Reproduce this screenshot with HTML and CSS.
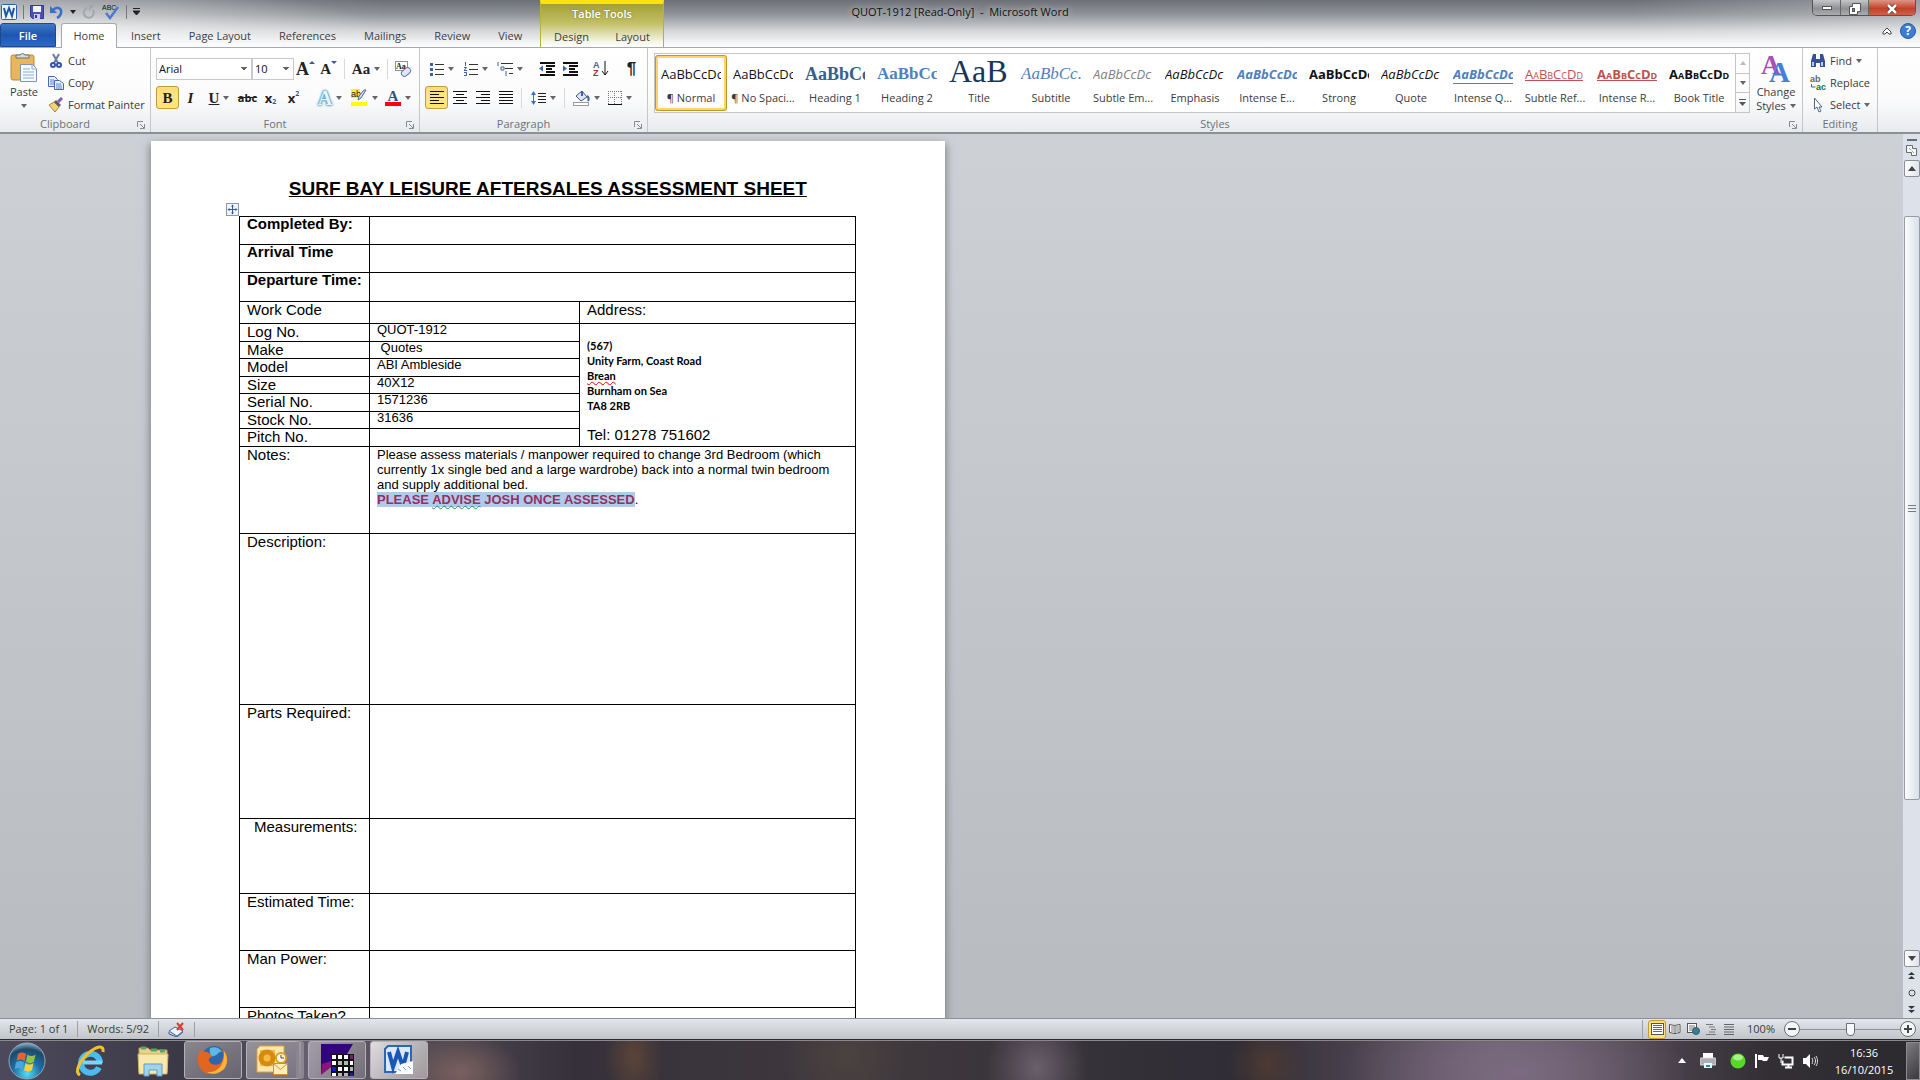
FILE: index.html
```html
<!DOCTYPE html>
<html lang="en">

<head>
    <meta charset="UTF-8">
    <meta name="viewport" content="width=device-width, initial-scale=1.0">
    <title>QUOT-1912 [Read-Only] - Microsoft Word</title>
    <link rel="stylesheet" href="styles.css">
</head>

<body>
    <header class="header">
        <div class="header-left">
            <div class="quick-access">
                <svg width="16" height="16" viewBox="0 0 16 16"><rect x="0.5" y="0.5" width="15" height="15" rx="1" fill="#eef4fc" stroke="#2b5fa8"/><path d="M3 4l2 8 3-8 3 8 2-8" fill="none" stroke="#1d55a5" stroke-width="2"/></svg>
                <span class="qa-line"></span>
                <button aria-label="Save"><svg width="14" height="14" viewBox="0 0 14 14"><path d="M0.5 0.5h13v13h-11l-2-2z" fill="#4c50b8" stroke="#34388e"/><rect x="3" y="1" width="8" height="6" fill="#f2f4fb"/><rect x="4" y="9" width="6" height="5" fill="#c9cde6"/><rect x="5" y="10" width="2" height="3" fill="#34388e"/></svg></button>
                <button aria-label="Undo"><svg width="14" height="14" viewBox="0 0 14 14"><path d="M3 5c4-4 9-2 8 3-0.500 3-2 4-4 5" fill="none" stroke="#3b6fc4" stroke-width="2.500"/><path d="M0 1v7h7z" fill="#3b6fc4"/></svg></button>
                <span class="arrow dark"></span>
                <button aria-label="Redo"><svg width="14" height="14" viewBox="0 0 14 14"><path d="M5 3a5 5 0 1 0 6 2" fill="none" stroke="#a3a6ab" stroke-width="2"/><path d="M7 6V0h6z" fill="#a3a6ab"/></svg></button>
                <button aria-label="Spelling"><svg width="18" height="16" viewBox="0 0 18 16"><text x="0" y="6" font-family="Liberation Sans" font-size="7" fill="#111">ABC</text><path d="M4 9l4 5 8-11" fill="none" stroke="#4b7bd0" stroke-width="2.500"/></svg></button>
                <span class="qa-line"></span>
                <svg width="7" height="7" viewBox="0 0 7 7"><path d="M0 0.500h7M0 3h7L3.500 7z" stroke="#222" fill="#222" stroke-width="1"/></svg>
            </div>
            <nav class="tabs">
                <button class="tab file">File</button>
                <button class="tab active">Home</button>
                <button class="tab">Insert</button>
                <button class="tab">Page Layout</button>
                <button class="tab">References</button>
                <button class="tab">Mailings</button>
                <button class="tab">Review</button>
                <button class="tab">View</button>
            </nav>
        </div>
        <div class="context">
            <div class="context-title">Table Tools</div>
            <nav class="tabs">
                <button class="tab">Design</button>
                <button class="tab">Layout</button>
            </nav>
        </div>
        <h1 class="window-title">QUOT-1912 [Read-Only]&nbsp; -&nbsp; Microsoft Word</h1>
        <div class="header-right">
            <div class="window-buttons">
                <button aria-label="Minimize"><svg width="10" height="5"><rect x="0.500" y="0.500" width="9" height="3" fill="#fff" stroke="#555"/></svg></button>
                <button aria-label="Restore"><svg width="12" height="12"><path d="M3.500 0.500h8v8h-3v3h-8v-8h3z" fill="#fff" stroke="#555"/><rect x="3.500" y="5.500" width="2" height="3" fill="#888" stroke="#555"/></svg></button>
                <button class="close" aria-label="Close"><svg width="12" height="10" viewBox="0 0 12 10"><path d="M2 1l8 8M10 1L2 9" stroke="#5c2a24" stroke-width="4"/><path d="M2 1l8 8M10 1L2 9" stroke="#fff" stroke-width="2.500"/></svg></button>
            </div>
            <div class="help-row">
                <button aria-label="Minimize the Ribbon"><svg width="10" height="9" viewBox="0 0 10 9"><path d="M1 5l4-4 4 4v2H7L5 5 3 7H1z" fill="#fff" stroke="#444"/></svg></button>
                <button aria-label="Help"><svg width="16" height="16" viewBox="0 0 16 16"><circle cx="8" cy="8" r="7.500" fill="#3e7bd3" stroke="#2a5da8"/><text x="8" y="12" text-anchor="middle" font-family="Open Sans" font-weight="700" font-size="12" fill="#fff">?</text></svg></button>
            </div>
        </div>
    </header>

    <section class="ribbon">
        <div class="group clipboard">
            <div class="group-body">
                <button class="big">
                    <svg width="28" height="32" viewBox="0 0 28 32"><rect x="1" y="3" width="23" height="25" rx="2" fill="#e9b65f" stroke="#b98a3c"/><path d="M6 6V3h4a3 3 0 0 1 5 0h4v3z" fill="#d8dade" stroke="#6d7077"/><path d="M10.500 12.500h12l4 4v13h-16z" fill="#f7faff" stroke="#7c93b8"/><path d="M22 12v5h5M13 17h7M13 20h11M13 23h11M13 26h11" fill="none" stroke="#8ea9d2"/></svg>
                    <span>Paste</span>
                    <span class="arrow"></span>
                </button>
                <div class="stack">
                    <button class="cmd"><svg width="16" height="16" viewBox="0 0 16 16"><path d="M5 1l5 9M11 1L6 10" stroke="#6b7c99" stroke-width="2"/><circle cx="5" cy="12" r="2" fill="none" stroke="#2f55b0" stroke-width="2"/><circle cx="11" cy="12" r="2" fill="none" stroke="#2f55b0" stroke-width="2"/></svg>Cut</button>
                    <button class="cmd"><svg width="16" height="16" viewBox="0 0 16 16"><path d="M0.500 1.500h6l3 3v7h-9z" fill="#eaf1fc" stroke="#4469ad"/><path d="M6.500 5.500h5l4 3v6h-9z" fill="#eaf1fc" stroke="#4469ad"/><path d="M2 5h4M2 7h4M2 9h4M8 9h5M8 11h6M8 13h6" stroke="#5d84c6"/></svg>Copy</button>
                    <button class="cmd"><svg width="16" height="16" viewBox="0 0 16 16"><path d="M1 8l5-3 5 5-4 5z" fill="#f0d375" stroke="#a98a35"/><path d="M6 5l2-2 5 5-2 2z" fill="#5a5d66"/><path d="M10 5l4-4" stroke="#8a5cb0" stroke-width="3"/></svg>Format Painter</button>
                </div>
            </div>
            <footer class="group-name">Clipboard<button class="launch" aria-label="Clipboard pane"><svg width="8" height="8" viewBox="0 0 8 8"><path d="M0.500 6V0.500H6M3 3l4 4M7.500 3v4.500H3" fill="none" stroke="#858b94"/></svg></button></footer>
        </div>

        <div class="group font">
            <div class="tools">
                <div class="tool-row">
                    <select class="font-name" aria-label="Font"><option>Arial</option></select>
                    <select class="font-size" aria-label="Font size"><option>10</option></select>
                    <button class="tool serif grow" aria-label="Grow font">A<sup class="tri-up"></sup></button>
                    <button class="tool serif shrink" aria-label="Shrink font">A<sup class="tri-down"></sup></button>
                    <span class="line"></span>
                    <button class="tool split serif">Aa<span class="arrow"></span></button>
                    <span class="line"></span>
                    <button class="tool" aria-label="Clear formatting"><svg width="17" height="16" viewBox="0 0 17 16"><rect x="0.500" y="0.500" width="12" height="9" fill="#fff" stroke="#8b93a5"/><text x="1" y="8" font-family="Liberation Serif" font-weight="700" font-size="8" fill="#222">Aa</text><rect x="6" y="8" width="10" height="6" rx="3" transform="rotate(-40 11 11)" fill="#dfe7f5" stroke="#60749b"/></svg></button>
                </div>
                <div class="tool-row">
                    <button class="tool serif on">B</button>
                    <button class="tool serif italic">I</button>
                    <button class="tool split serif"><u>U</u><span class="arrow"></span></button>
                    <button class="tool strike"><s>abc</s></button>
                    <button class="tool script">x<sub>2</sub></button>
                    <button class="tool script">x<sup>2</sup></button>
                    <span class="line"></span>
                    <button class="tool split serif glow">A<span class="arrow"></span></button>
                    <button class="tool split" aria-label="Highlight"><svg width="17" height="17" viewBox="0 0 17 17"><rect x="0" y="0" width="9" height="9" fill="#f7f02b"/><text x="0" y="8" font-family="Liberation Sans" font-size="9" fill="#222">ab</text><path d="M15 1l-5 8-3 2 1-4 5-6z" fill="#cfd9ec" stroke="#516a9a"/><rect x="0" y="13" width="16" height="4" fill="#ffff00"/></svg><span class="arrow"></span></button>
                    <button class="tool split" aria-label="Font colour"><svg width="16" height="17" viewBox="0 0 16 17"><text x="8" y="12" text-anchor="middle" font-family="Liberation Serif" font-weight="700" font-size="15" fill="#354f88">A</text><rect x="0" y="13" width="16" height="4" fill="#ff0000"/></svg><span class="arrow"></span></button>
                </div>
            </div>
            <footer class="group-name">Font<button class="launch" aria-label="Font dialog"><svg width="8" height="8" viewBox="0 0 8 8"><path d="M0.500 6V0.500H6M3 3l4 4M7.500 3v4.500H3" fill="none" stroke="#858b94"/></svg></button></footer>
        </div>

        <div class="group paragraph">
            <div class="tools">
                <div class="tool-row">
                    <button class="tool split" aria-label="Bullets"><svg width="14" height="14" viewBox="0 0 14 14"><path d="M5 2.500h9M5 7.500h9M5 12.500h9" stroke="#333"/><path d="M0 2.500h3M0 7.500h3M0 12.500h3" stroke="#3c5fa8" stroke-width="3"/></svg><span class="arrow"></span></button>
                    <button class="tool split" aria-label="Numbering"><svg width="14" height="14" viewBox="0 0 14 14"><path d="M5 2.500h9M5 7.500h9M5 12.500h9" stroke="#333"/><path d="M1.500 0v4M0 5.500h2.500L0 8.500h3M0 10.500h2.500v3H0" fill="none" stroke="#3c5fa8"/></svg><span class="arrow"></span></button>
                    <button class="tool split" aria-label="Multilevel list"><svg width="16" height="14" viewBox="0 0 16 14"><path d="M4 1.500h12M8 6.500h8M12 11.500h4" stroke="#333"/><path d="M1 0v4M4 5h3v3H4zM9 9v5" fill="none" stroke="#3c5fa8"/></svg><span class="arrow"></span></button>
                    <span class="line"></span>
                    <button class="tool" aria-label="Decrease indent"><svg width="16" height="14" viewBox="0 0 16 14"><path d="M1 1h15M7 4h9M7 7h6M7 10h9M1 13h15" stroke="#111" stroke-width="2"/><path d="M0 6.500l4-3v6z" fill="#3c5fc4"/></svg></button>
                    <button class="tool" aria-label="Increase indent"><svg width="16" height="14" viewBox="0 0 16 14"><path d="M1 1h15M7 4h9M7 7h6M7 10h9M1 13h15" stroke="#111" stroke-width="2"/><path d="M5 6.500l-4-3v6z" fill="#3c5fc4"/></svg></button>
                    <span class="line"></span>
                    <button class="tool" aria-label="Sort"><svg width="16" height="17" viewBox="0 0 16 17"><text x="0" y="8" font-family="Liberation Sans" font-weight="700" font-size="9" fill="#3c5fa8">A</text><text x="0" y="16" font-family="Liberation Sans" font-weight="700" font-size="9" fill="#a03048">Z</text><path d="M12 1v14M9 11l3 4 3-4" fill="none" stroke="#111"/></svg></button>
                    <span class="line"></span>
                    <button class="tool pilcrow">¶</button>
                </div>
                <div class="tool-row">
                    <button class="tool on" aria-label="Align left"><svg width="14" height="13" viewBox="0 0 14 13"><path d="M0 0.500h14M0 3.500h9M0 6.500h14M0 9.500h9M0 12.500h14" stroke="#111"/></svg></button>
                    <button class="tool" aria-label="Centre"><svg width="14" height="13" viewBox="0 0 14 13"><path d="M0 0.500h14M3 3.500h8M0 6.500h14M3 9.500h8M0 12.500h14" stroke="#111"/></svg></button>
                    <button class="tool" aria-label="Align right"><svg width="14" height="13" viewBox="0 0 14 13"><path d="M0 0.500h14M5 3.500h9M0 6.500h14M5 9.500h9M0 12.500h14" stroke="#111"/></svg></button>
                    <button class="tool" aria-label="Justify"><svg width="14" height="13" viewBox="0 0 14 13"><path d="M0 0.500h14M0 3.500h14M0 6.500h14M0 9.500h14M0 12.500h14" stroke="#111"/></svg></button>
                    <span class="line"></span>
                    <button class="tool split" aria-label="Line spacing"><svg width="15" height="16" viewBox="0 0 15 16"><path d="M7 3.500h8M7 6.500h8M7 9.500h8M7 12.500h8" stroke="#222"/><path d="M0 5l2.500-4L5 5zM0 11l2.500 4L5 11z" fill="#3c6fc4"/><path d="M2.500 4v8" stroke="#3c6fc4"/></svg><span class="arrow"></span></button>
                    <span class="line"></span>
                    <button class="tool split" aria-label="Shading"><svg width="17" height="16" viewBox="0 0 17 16"><path d="M3 6l6-5 5 6-6 4z" fill="#dce6f5" stroke="#45587c"/><path d="M9 1v5M14 6c2 1 2 3 1 5" fill="none" stroke="#3c5fa8" stroke-width="2"/><rect x="0.500" y="12.500" width="15" height="3" fill="#fff" stroke="#999"/></svg><span class="arrow"></span></button>
                    <button class="tool split" aria-label="Borders"><svg width="14" height="14" viewBox="0 0 14 14"><path d="M0 0.500h14M0 6.500h14M0.500 0v14M6.500 0v14M13.500 0v14" stroke="#777" stroke-dasharray="1 1"/><path d="M0 13.500h14" stroke="#111"/></svg><span class="arrow"></span></button>
                </div>
            </div>
            <footer class="group-name">Paragraph<button class="launch" aria-label="Paragraph dialog"><svg width="8" height="8" viewBox="0 0 8 8"><path d="M0.500 6V0.500H6M3 3l4 4M7.500 3v4.500H3" fill="none" stroke="#858b94"/></svg></button></footer>
        </div>

        <div class="group styles">
            <div class="group-body">
                <div class="gallery">
                    <button class="style selected"><span class="preview">AaBbCcDc</span>¶ Normal</button>
                    <button class="style"><span class="preview">AaBbCcDc</span>¶ No Spaci...</button>
                    <button class="style"><span class="preview heading one">AaBbCc</span>Heading 1</button>
                    <button class="style"><span class="preview heading">AaBbCc</span>Heading 2</button>
                    <button class="style"><span class="preview title">AaB</span>Title</button>
                    <button class="style"><span class="preview subtitle">AaBbCc.</span>Subtitle</button>
                    <button class="style"><span class="preview slant grey">AaBbCcDc</span>Subtle Em...</button>
                    <button class="style"><span class="preview slant">AaBbCcDc</span>Emphasis</button>
                    <button class="style"><span class="preview slant strong blue">AaBbCcDc</span>Intense E...</button>
                    <button class="style"><span class="preview strong">AaBbCcDc</span>Strong</button>
                    <button class="style"><span class="preview slant">AaBbCcDc</span>Quote</button>
                    <button class="style"><span class="preview slant strong blue ruled">AaBbCcDc</span>Intense Q...</button>
                    <button class="style"><span class="preview caps red">AaBbCcDd</span>Subtle Ref...</button>
                    <button class="style"><span class="preview caps red strong">AaBbCcDd</span>Intense R...</button>
                    <button class="style"><span class="preview caps strong">AaBbCcDd</span>Book Title</button>
                </div>
                <div class="gallery-scroll">
                    <button aria-label="Row up"><span class="arrow up faint"></span></button>
                    <button aria-label="Row down"><span class="arrow"></span></button>
                    <button aria-label="More styles"><svg width="7" height="7" viewBox="0 0 7 7"><path d="M0 0.500h7" stroke="#555"/><path d="M0 3h7L3.500 7z" fill="#555"/></svg></button>
                </div>
                <button class="big change">
                    <svg width="30" height="32" viewBox="0 0 30 32"><text x="0" y="22" font-family="Liberation Serif" font-weight="700" font-size="27" fill="#a94fb5">A</text><text x="8" y="30" font-family="Liberation Serif" font-weight="700" font-size="29" fill="#4580d8">A</text></svg>
                    <span>Change</span>
                    <span class="inline">Styles<span class="arrow"></span></span>
                </button>
            </div>
            <footer class="group-name">Styles<button class="launch" aria-label="Styles pane"><svg width="8" height="8" viewBox="0 0 8 8"><path d="M0.500 6V0.500H6M3 3l4 4M7.500 3v4.500H3" fill="none" stroke="#858b94"/></svg></button></footer>
        </div>

        <div class="group editing">
            <div class="stack">
                <button class="cmd"><svg width="16" height="16" viewBox="0 0 16 16"><path d="M3 1h3v5h4V1h3l2 7v6h-5v-4H6v4H1V8z" fill="#34509a"/><path d="M3 9v4M12 9v4" stroke="#b8cbee" stroke-width="2"/></svg>Find<span class="arrow"></span></button>
                <button class="cmd"><svg width="16" height="16" viewBox="0 0 16 16"><text x="0" y="7" font-family="Liberation Sans" font-weight="700" font-size="9" fill="#666">ab</text><text x="6" y="15" font-family="Liberation Sans" font-weight="700" font-size="9" fill="#26712b">ac</text><path d="M1.500 9v3h4" fill="none" stroke="#3c5fa8"/></svg>Replace</button>
                <button class="cmd"><svg width="16" height="16" viewBox="0 0 16 16"><path d="M4.500 1v11l2.500-2 2 5 2-1-2-4h3z" fill="#fff" stroke="#51658e"/></svg>Select<span class="arrow"></span></button>
            </div>
            <footer class="group-name">Editing</footer>
        </div>
    </section>

    <main class="workspace">
        <div class="canvas">
            <article class="page">
                <h2>SURF BAY LEISURE AFTERSALES ASSESSMENT SHEET</h2>
                <div class="sheet-wrap">
                    <svg class="move-handle" width="13" height="13" viewBox="0 0 13 13"><rect x="0.500" y="0.500" width="12" height="12" fill="#f1f4fa" stroke="#8d97a8"/><path d="M6.500 2v9M2 6.500h9" stroke="#33569c"/><path d="M5 3.500l1.500-2 1.500 2zM5 9.500l1.500 2 1.500-2zM3.500 5l-2 1.500 2 1.500zM9.500 5l2 1.500-2 1.500z" fill="#33569c"/></svg>
                    <table class="sheet">
                        <colgroup><col class="c1"><col class="c2"><col class="c3"></colgroup>
                        <tr class="tall"><th class="bold">Completed By:</th><td colspan="2"></td></tr>
                        <tr class="tall"><th class="bold">Arrival Time</th><td colspan="2"></td></tr>
                        <tr class="tall last"><th class="bold">Departure Time:</th><td colspan="2"></td></tr>
                        <tr class="work"><th>Work Code</th><td></td><td class="large">Address:</td></tr>
                        <tr class="odd"><th>Log No.</th><td>QUOT-1912</td>
                            <td class="address" rowspan="7">
                                <address>(567)<br>Unity Farm, Coast Road<br><span class="misspelt">Brean</span><br>Burnham on Sea<br>TA8 2RB</address>
                                <p class="large">Tel: 01278 751602</p>
                            </td>
                        </tr>
                        <tr class="even"><th>Make</th><td>&nbsp;Quotes</td></tr>
                        <tr class="odd"><th>Model</th><td>ABI Ambleside</td></tr>
                        <tr class="even"><th>Size</th><td>40X12</td></tr>
                        <tr class="odd"><th>Serial No.</th><td>1571236</td></tr>
                        <tr class="even"><th>Stock No.</th><td>31636</td></tr>
                        <tr class="odd"><th>Pitch No.</th><td></td></tr>
                        <tr class="notes"><th>Notes:</th><td colspan="2">Please assess materials / manpower required to change 3rd Bedroom (which<br>currently 1x single bed and a large wardrobe) back into a normal twin bedroom<br>and supply additional bed.<br><mark>PLEASE <span class="grammar">ADVISE</span> JOSH ONCE ASSESSED</mark>.</td></tr>
                        <tr class="description"><th>Description:</th><td colspan="2"></td></tr>
                        <tr class="parts"><th>Parts Required:</th><td colspan="2"></td></tr>
                        <tr class="measure"><th class="indent">Measurements:</th><td colspan="2"></td></tr>
                        <tr class="estimate"><th>Estimated Time:</th><td colspan="2"></td></tr>
                        <tr class="estimate"><th>Man Power:</th><td colspan="2"></td></tr>
                        <tr class="estimate"><th>Photos Taken?</th><td colspan="2"></td></tr>
                    </table>
                </div>
            </article>
        </div>
        <div class="scrollbar">
            <span class="splitter"></span>
            <button class="ruler" aria-label="View ruler"><svg width="13" height="13" viewBox="0 0 13 13"><path d="M1.500 1.500h6v3h4v7h-5v-3h-5z" fill="#f7f8fa" stroke="#666b74"/><path d="M4 4l5 5" stroke="#666b74" stroke-dasharray="1 1"/></svg></button>
            <button class="scroll-btn" aria-label="Scroll up"><span class="arrow big-arrow up"></span></button>
            <div class="track"><div class="thumb"><svg width="8" height="7" viewBox="0 0 8 7"><path d="M0 0.500h8M0 3.500h8M0 6.500h8" stroke="#777d86"/></svg></div></div>
            <button class="scroll-btn" aria-label="Scroll down"><span class="arrow big-arrow"></span></button>
            <button class="browse" aria-label="Previous page"><svg width="7" height="7" viewBox="0 0 7 7"><path d="M0 3l3.500-3L7 3zM0 7l3.500-3L7 7z" fill="#333"/></svg></button>
            <button class="browse" aria-label="Browse object"><svg width="8" height="8" viewBox="0 0 8 8"><circle cx="4" cy="4" r="3" fill="none" stroke="#444"/></svg></button>
            <button class="browse" aria-label="Next page"><svg width="7" height="7" viewBox="0 0 7 7"><path d="M0 0l3.500 3L7 0zM0 4l3.500 3L7 4z" fill="#333"/></svg></button>
        </div>
    </main>

    <div class="status">
        <span class="status-item">Page: 1 of 1</span>
        <span class="status-item">Words: 5/92</span>
        <span class="status-item proof"><svg width="17" height="15" viewBox="0 0 17 15"><path d="M1 9l6-4 8 4-6 5z" fill="#eef2fa" stroke="#4c68a3"/><path d="M1 10v2l8 3 6-5" fill="none" stroke="#3c5fa8"/><path d="M9 1l6 7M15 1L9 8" stroke="#dc3a2c" stroke-width="2"/></svg></span>
        <div class="status-right">
            <button class="view on" aria-label="Print layout"><svg width="13" height="12" viewBox="0 0 13 12"><rect x="0.500" y="0.500" width="12" height="11" fill="#fff" stroke="#555"/><path d="M2 2.500h9M2 4.500h9M2 6.500h9M2 8.500h9" stroke="#666"/></svg></button>
            <button class="view" aria-label="Full screen reading"><svg width="12" height="12" viewBox="0 0 12 12"><path d="M0.500 1.500l5 1 5.500-1v8l-5 1-5.500-1zM6 3v8" fill="#fff" stroke="#555"/><path d="M2 4h3M2 6h3M2 8h3M7 4h3M7 6h3M7 8h3" stroke="#777"/></svg></button>
            <button class="view" aria-label="Web layout"><svg width="13" height="12" viewBox="0 0 13 12"><rect x="0.500" y="0.500" width="9" height="9" fill="#fff" stroke="#555"/><path d="M2 3h6M2 5h6M2 7h4" stroke="#777"/><circle cx="9" cy="8" r="3.500" fill="#3b8085" stroke="#2a5b86"/></svg></button>
            <button class="view" aria-label="Outline"><svg width="12" height="12" viewBox="0 0 12 12"><path d="M1 1.500h7M4 4h6M6 6.500h5M4 9h6M1 11.500h10" stroke="#777"/></svg></button>
            <button class="view" aria-label="Draft"><svg width="12" height="12" viewBox="0 0 12 12"><path d="M1 1.500h10M1 4h10M1 6.500h10M1 9h10M1 11.500h10" stroke="#666"/></svg></button>
            <button class="zoom-level">100%</button>
            <button class="zoom-btn" aria-label="Zoom out"><svg width="16" height="16" viewBox="0 0 16 16"><circle cx="8" cy="8" r="7.500" fill="#f4f5f7" stroke="#6b6f76"/><path d="M4 8h8" stroke="#444" stroke-width="2"/></svg></button>
            <input class="zoom-slider" type="range" min="0" max="100" value="50" aria-label="Zoom">
            <button class="zoom-btn" aria-label="Zoom in"><svg width="16" height="16" viewBox="0 0 16 16"><circle cx="8" cy="8" r="7.500" fill="#f4f5f7" stroke="#6b6f76"/><path d="M4 8h8M8 4v8" stroke="#444" stroke-width="2"/></svg></button>
        </div>
    </div>

    <footer class="taskbar">
        <button class="start" aria-label="Start">
            <svg width="38" height="38" viewBox="0 0 38 38"><defs><radialGradient id="orb" cx="50%" cy="85%" r="85%"><stop offset="0" stop-color="#56dcf5"/><stop offset="0.45" stop-color="#1d6ea4"/><stop offset="0.8" stop-color="#1e4866"/><stop offset="1" stop-color="#8fb3c9"/></radialGradient></defs><circle cx="19" cy="19" r="18" fill="url(#orb)" stroke="#8fa9b8"/><path d="M10 12c3-2 5-2 8 0l-1.500 7c-3-2-5-2-8 0z" fill="#e8613a"/><path d="M19.500 12.500c3 2 5 2 8 0l-1.500 7c-3 2-5 2-8 0z" fill="#8fc34a"/><path d="M8 20.500c3-2 5-2 8 0l-1.500 7c-3-2-5-2-8 0z" fill="#4aa5e0"/><path d="M17.500 21c3 2 5 2 8 0l-1.500 7c-3 2-5 2-8 0z" fill="#f8cf43"/></svg>
        </button>
        <button class="pin" aria-label="Internet Explorer">
            <svg width="32" height="32" viewBox="0 0 32 32"><path d="M26 18a9.500 9.500 0 1 0-1 4.500" fill="none" stroke="#49bdf0" stroke-width="6"/><path d="M9 17.500h19" stroke="#7ad5fa" stroke-width="4"/><path d="M6 30c-6-3 0-16 11-24 7-5 13-6 12 1" fill="none" stroke="#f2c02e" stroke-width="3"/></svg>
        </button>
        <button class="pin" aria-label="Explorer">
            <svg width="34" height="32" viewBox="0 0 34 32"><path d="M3 3h9l2 2h17v22H3z" fill="#e8d188" stroke="#b79b4d"/><path d="M5 3h5M15 5h6M24 6h5" stroke="#55a66d" stroke-width="3"/><path d="M2 9h30l-1 20H3z" fill="#f8e8ab" stroke="#cdb163"/><path d="M8 31V19h18v12h-5v-6h-8v6z" fill="#9fd3ee" stroke="#5b9fc5"/></svg>
        </button>
        <button class="task" aria-label="Firefox">
            <svg width="32" height="32" viewBox="0 0 32 32"><circle cx="17" cy="14" r="12" fill="#2c66ad"/><path d="M13 4c5-2 10 0 12 4-3-1-4 3-8 4-3 1-5-2-4-8z" fill="#62b5e0"/><path d="M3 5c2 2 4 3 7 3 3 1 4 3 5 5-2 0-4 2-3 4 3 6 13 5 14-3 1-4 0-8-3-10 6 3 8 9 7 14-2 9-11 13-18 12C3 29-2 18 3 5z" fill="#e2661f"/><path d="M27 7c4 5 4 13 0 18-5 5-12 6-17 3 9 1 18-5 17-21z" fill="#f5b53c"/></svg>
        </button>
        <button class="task many" aria-label="Outlook">
            <svg width="34" height="34" viewBox="0 0 34 34"><path d="M5 3h24v26H2V6z" fill="#fbe7ae" stroke="#e0a52c"/><rect x="5" y="7" width="15" height="16" fill="#f3bd44"/><circle cx="12" cy="15" r="6" fill="none" stroke="#d88a10" stroke-width="5"/><circle cx="26" cy="15" r="5" fill="#fdf6de" stroke="#d99d2c" stroke-width="2"/><path d="M26 12v3h3" fill="none" stroke="#444"/><path d="M18.500 20.500h14v11h-14z" fill="#fdeeba" stroke="#cf9420"/><path d="M18.500 20.500l7 6 7-6" fill="none" stroke="#cf9420"/></svg>
        </button>
        <button class="task" aria-label="Grid application">
            <svg width="34" height="34" viewBox="0 0 34 34"><path d="M1 1h32l-6 10H11v13l-10 7z" fill="#32057c"/><path d="M2 21l9-3v6L1 32z" fill="#8a1478"/><rect x="11" y="11" width="23" height="22" fill="#111"/><path d="M12 12h4v4h-4zM18 12h4v4h-4zM24 12h4v4h-4zM30 18h3v4h-3zM12 18h4v4h-4zM12 30h4v3h-4zM18 24h4v4h-4zM24 24h4v4h-4z" fill="#fff"/><path d="M24 18h4v4h-4zM18 18h4v4h-4zM24 30h4v3h-4zM30 24h3v4h-3zM18 30h4v3h-4z" fill="#b5b5b5"/><path d="M30 12h3v4h-3z" fill="#8a1478"/><path d="M12 24h4v4h-4zM30 30h3v3h-3z" fill="#1a1ac8"/></svg>
        </button>
        <button class="task current" aria-label="Word">
            <svg width="32" height="32" viewBox="0 0 32 32"><path d="M5 2h23v26H2V5z" fill="#dce9fa" stroke="#2f66b0" stroke-width="2"/><path d="M6 8l4 15 5-15 5 15 4-15" fill="none" stroke="#1a56b4" stroke-width="4"/><path d="M18 20l12-3v13H12z" fill="#fafcff"/><path d="M15 25l3 2M20 23l3 3M25 22l3 3" stroke="#7a9bcb"/></svg>
        </button>
        <div class="tray">
            <svg width="8" height="5" viewBox="0 0 8 5"><path d="M0 5l4-5 4 5z" fill="#fff"/></svg>
            <svg class="printer" width="16" height="16" viewBox="0 0 16 16"><rect x="3" y="0" width="10" height="7" fill="#fff"/><rect x="0" y="5" width="16" height="7" rx="1" fill="#a9afb2" stroke="#ddd"/><rect x="4" y="10" width="8" height="5" fill="#eafafa"/><path d="M6 13h4" stroke="#1d8dab" stroke-width="2"/></svg>
            <svg width="16" height="16" viewBox="0 0 16 16"><circle cx="8" cy="8" r="7.500" fill="#55d82a"/><ellipse cx="8" cy="4.500" rx="5" ry="3" fill="#a7f28a"/></svg>
            <svg width="16" height="16" viewBox="0 0 16 16"><path d="M2 1v14" stroke="#fff" stroke-width="2"/><path d="M4 2h5l1 2h5l-2 4H9L8 7H4z" fill="#fff"/></svg>
            <svg width="16" height="16" viewBox="0 0 16 16"><path d="M6.500 4.500h8v7h-10v-4M7 14.500h7M10.500 12v2" fill="none" stroke="#fff" stroke-width="2"/><path d="M1 1v4h4V1M3 5v5" fill="none" stroke="#fff"/></svg>
            <svg width="16" height="16" viewBox="0 0 16 16"><path d="M1 5h3l4-4v14l-4-4H1z" fill="#fff"/><path d="M10 5c1 2 1 4 0 6M12 4c2 2 2 6 0 8M14 3c2 3 2 7 0 10" fill="none" stroke="#ddd"/></svg>
            <div class="clock"><time>16:36</time><time>16/10/2015</time></div>
            <button class="show-desktop" aria-label="Show desktop"></button>
        </div>
    </footer>
</body>

</html>
```

FILE: styles.css
```css
* {
    box-sizing: border-box;
}

body {
    margin: 0;
    height: 100vh;
    display: flex;
    flex-direction: column;
    overflow: hidden;
    font-family: "Open Sans", "Noto Sans", sans-serif;
    font-size: 11px;
    line-height: 16px;
    color: #3b3b3b;
}

button {
    margin: 0;
    padding: 0;
    border: 0;
    background: none;
    font: inherit;
    color: inherit;
    display: flex;
    align-items: center;
    justify-content: center;
    flex-shrink: 0;
}

svg {
    display: block;
    flex-shrink: 0;
}

.arrow {
    width: 0;
    height: 0;
    border: 3px solid transparent;
    border-top: 4px solid #666;
    border-bottom: 0;
    flex-shrink: 0;
}

.arrow.dark {
    border-top-color: #222;
}

.arrow.up {
    transform: rotate(180deg);
}

.arrow.faint {
    border-top-color: #bbb;
}

.arrow.big-arrow {
    border-width: 5px 4px 0;
    border-top-color: #444;
}

/* title bar and tabs */
.header {
    position: relative;
    display: flex;
    height: 48px;
    flex-shrink: 0;
    border-bottom: 1px solid #a5a9b0;
    background:
        radial-gradient(ellipse 260px 40px at 6% 60%, rgba(255, 255, 255, 0.4), rgba(255, 255, 255, 0)),
        linear-gradient(to right, rgba(255, 255, 255, 0.35), rgba(255, 255, 255, 0) 20%, rgba(255, 255, 255, 0) 85%, rgba(255, 255, 255, 0.3)),
        linear-gradient(#6c7077, #8f9297 30%, #d3d5d7 65%, #fafafa 95%);
}

.header-left {
    width: 540px;
    display: flex;
    flex-direction: column;
}

.quick-access {
    height: 24px;
    display: flex;
    align-items: center;
    gap: 6px;
    padding-left: 1px;
}

.qa-line {
    width: 1px;
    height: 14px;
    background: #777;
}

.tabs {
    display: flex;
    height: 24px;
}

.tab {
    padding: 2px 14px 0;
    height: 24px;
    font-size: 11px;
    color: #3c3f45;
}

.tab.file {
    width: 56px;
    color: #fff;
    font-weight: 600;
    border: 1px solid #1c4a92;
    border-radius: 3px 3px 0 0;
    background: linear-gradient(#3f78c8, #1f56ae 50%, #2a6bc8);
}

.tab.active {
    margin-left: 5px;
    width: 56px;
    height: 25px;
    padding: 0;
    border: 1px solid #a5a9b0;
    border-bottom: 0;
    border-radius: 3px 3px 0 0;
    background: #fff;
    z-index: 1;
}

.context {
    width: 124px;
    border-left: 1px solid #b5b334;
    border-right: 1px solid #b5b334;
    border-top: 4px solid #fbe40d;
    background: linear-gradient(#a3a036, #c3c065 45%, #f2f2e0 85%, #fff);
}

.context-title {
    height: 20px;
    line-height: 20px;
    text-align: center;
    color: #fff;
    font-weight: 600;
    text-shadow: 0 0 2px #77752a;
}

.context .tab {
    padding: 2px 12px 0;
    flex: 1;
}

.window-title {
    position: absolute;
    top: 4px;
    left: 0;
    right: 0;
    margin: 0;
    text-align: center;
    font-size: 11px;
    font-weight: 400;
    color: #111;
    text-shadow: 0 0 6px #ddd;
    pointer-events: none;
}

.header-right {
    margin-left: auto;
    display: flex;
    flex-direction: column;
    align-items: flex-end;
    padding-right: 4px;
}

.window-buttons {
    display: flex;
    border: 1px solid #555;
    border-top: 0;
    border-radius: 0 0 5px 5px;
    overflow: hidden;
}

.window-buttons button {
    width: 28px;
    height: 17px;
    border-right: 1px solid #666;
    background: linear-gradient(#c5c6c8, #8e9093 50%, #b4b5b7);
}

.window-buttons .close {
    width: 46px;
    border-right: 0;
    background: linear-gradient(#dd9685, #c3402a 50%, #d7694f);
}

.help-row {
    display: flex;
    align-items: center;
    gap: 8px;
    height: 36px;
}

/* ribbon */
.ribbon {
    display: flex;
    height: 86px;
    flex-shrink: 0;
    border-bottom: 2px solid #8b9097;
    background: linear-gradient(#ffffff, #fbfbfc 60%, #e8ebee);
}

.group {
    display: flex;
    flex-direction: column;
    border-right: 1px solid #c3c7cc;
    flex-shrink: 0;
}

.clipboard {
    width: 151px;
}

.font {
    width: 269px;
}

.paragraph {
    width: 228px;
}

.styles {
    width: 1155px;
    flex-shrink: 1;
}

.editing {
    width: 75px;
}

.group-body {
    display: flex;
    height: 68px;
}

.group-name {
    position: relative;
    margin-top: auto;
    height: 16px;
    padding-right: 20px;
    line-height: 16px;
    text-align: center;
    color: #6b727d;
}

.editing .group-name {
    padding-right: 0;
}

.launch {
    position: absolute;
    right: 5px;
    top: 5px;
}

.big {
    flex-direction: column;
    justify-content: flex-start;
    width: 48px;
    padding-top: 4px;
}

.big .arrow {
    margin-top: 4px;
}

.inline {
    display: flex;
    gap: 4px;
    line-height: 12px;
}

.change {
    width: 52px;
}

.stack {
    display: flex;
    flex-direction: column;
    padding-top: 2px;
}

.cmd {
    height: 22px;
    justify-content: flex-start;
    gap: 4px;
}

.editing .stack {
    padding-left: 7px;
}

.tools {
    padding: 9px 4px 0 5px;
    display: flex;
    flex-direction: column;
    gap: 6px;
}

.tool-row {
    display: flex;
    align-items: center;
    height: 23px;
}

select {
    appearance: none;
    height: 22px;
    margin: 0;
    padding: 0 2px;
    border: 1px solid #c6c9ce;
    border-radius: 0;
    font-family: inherit;
    font-size: 11px;
    color: #111;
    background:
        linear-gradient(45deg, transparent 50%, #666 50%) right 7px center / 3px 4px no-repeat,
        linear-gradient(-45deg, transparent 50%, #666 50%) right 4px center / 3px 4px no-repeat,
        #fff;
}

.font-name {
    width: 98px;
}

.font-size {
    width: 43px;
}

.tool {
    width: 23px;
    height: 23px;
    color: #222;
}

.tool.split {
    width: 34px;
    gap: 4px;
}

.tool.on,
.view.on {
    border: 1px solid #c29b3a;
    border-radius: 3px;
    background: linear-gradient(#fbdb7b, #fde48c 50%, #ffe66b);
}

.line {
    width: 1px;
    height: 20px;
    margin: 0 4px;
    background: #d5d8dc;
}

.serif {
    font-family: "Liberation Serif", serif;
    font-size: 15px;
    font-weight: 700;
}

.italic {
    font-style: italic;
}

.grow {
    font-size: 18px;
}

.tri-up,
.tri-down {
    border: 3px solid transparent;
    margin-bottom: 12px;
}

.tri-up {
    border-bottom: 3px solid #3b5a94;
    border-top: 0;
}

.tri-down {
    border-top: 3px solid #3b5a94;
    border-bottom: 0;
}

.strike,
.script {
    font-size: 11px;
    font-weight: 700;
}

.script {
    font-size: 13px;
}

.script sub,
.script sup {
    font-size: 7px;
    line-height: 7px;
    color: #35589c;
}

.script sup {
    margin-bottom: 8px;
}

.script sub {
    margin-top: 8px;
}

.glow {
    font-size: 20px;
    color: #e9f6fd;
    text-shadow: 0 0 2px #3b93c4, 0 0 2px #3b93c4, 0 0 3px #3b93c4;
}

.pilcrow {
    font-family: "Liberation Sans", sans-serif;
    font-size: 17px;
    font-weight: 700;
}

.gallery {
    flex: 1;
    display: flex;
    height: 60px;
    margin: 5px 0 0 6px;
    border: 1px solid #c3c7cc;
    background: #fff;
    overflow: hidden;
}

.style {
    width: 72px;
    flex-direction: column;
    justify-content: flex-end;
    padding-bottom: 6px;
}

.style.selected {
    margin: 1px 0;
    padding-bottom: 2px;
    border: 3px solid #f8d768;
    border-radius: 3px;
    outline: 1px solid #c0942f;
    outline-offset: -1px;
}

.preview {
    width: 60px;
    height: 32px;
    line-height: 32px;
    overflow: hidden;
    white-space: nowrap;
    text-align: left;
    font-family: "Open Sans", sans-serif;
    font-size: 13px;
    color: #111;
}

.preview.heading {
    font-family: "Liberation Serif", serif;
    font-size: 17px;
    font-weight: 700;
    color: #4f81bd;
}

.preview.one {
    font-size: 18px;
    color: #365f91;
}

.preview.title {
    font-family: "Liberation Serif", serif;
    font-size: 32px;
    line-height: 26px;
    color: #17365d;
}

.preview.subtitle {
    font-family: "Liberation Serif", serif;
    font-size: 17px;
    font-style: italic;
    color: #4f81bd;
}

.slant {
    font-style: italic;
}

.strong {
    font-weight: 700;
}

.preview.blue {
    color: #4f81bd;
}

.preview.grey {
    color: #808080;
}

.preview.red {
    color: #c0504d;
    text-decoration: underline;
}

.caps {
    font-variant: small-caps;
}

.preview.ruled {
    text-decoration: underline;
    text-underline-offset: 4px;
}

.gallery-scroll {
    width: 14px;
    height: 60px;
    margin-top: 5px;
    display: flex;
    flex-direction: column;
    border: 1px solid #c3c7cc;
    border-left: 0;
}

.gallery-scroll button {
    flex: 1;
}

.gallery-scroll button + button {
    border-top: 1px solid #c3c7cc;
}

/* document */
.workspace {
    flex: 1;
    min-height: 0;
    display: flex;
    background: linear-gradient(#cdd1d6, #b8bbc0);
}

.canvas {
    flex: 1;
    overflow: hidden;
    padding: 7px 0 0 151px;
}

.page {
    width: 210mm;
    height: 297mm;
    padding: 36px 88px 0;
    background: #fff;
    box-shadow: 0 4px 8px 1px #7b7f85;
    color: #000;
    font-family: "Liberation Sans", Arial, sans-serif;
}

.page h2 {
    margin: 0 0 15px;
    text-align: center;
    white-space: nowrap;
    font-size: 19px;
    line-height: 24px;
    text-decoration: underline;
}

.sheet-wrap {
    position: relative;
}

.move-handle {
    position: absolute;
    left: -13px;
    top: -13px;
}

.sheet {
    width: 617px;
    table-layout: fixed;
    border-collapse: collapse;
    font-size: 13px;
    line-height: 15px;
}

.c1 {
    width: 130px;
}

.c2 {
    width: 210px;
}

.sheet th,
.sheet td {
    border: 1px solid #000;
    padding: 0 0 0 7px;
    vertical-align: top;
    text-align: left;
    white-space: nowrap;
}

.sheet th,
.sheet .large {
    font-size: 15px;
    line-height: 16px;
    font-weight: 400;
}

.sheet th.bold {
    line-height: 14px;
    font-weight: 700;
}

.sheet th.indent {
    padding-left: 14px;
}

.sheet td {
    line-height: 12px;
}

.tall {
    height: 28px;
}

.tall.last {
    height: 29px;
}

.work {
    height: 22px;
}

.odd {
    height: 18px;
}

.even {
    height: 17px;
}

.notes {
    height: 87px;
}

.sheet .notes td {
    line-height: 15px;
}

.description {
    height: 171px;
}

.parts {
    height: 114px;
}

.measure {
    height: 75px;
}

.estimate {
    height: 57px;
}

address {
    margin-top: 14px;
    font-family: Lato, sans-serif;
    font-style: normal;
    font-weight: 700;
    font-size: 11px;
    line-height: 15px;
}

.address p {
    margin: 14px 0 0;
}

.misspelt {
    text-decoration: underline wavy #d00 1px;
}

.grammar {
    text-decoration: underline wavy #2a8a5f 1px;
}

mark {
    font-weight: 700;
    color: #96305f;
    background: #aecbeb;
}

/* vertical scroll bar */
.scrollbar {
    width: 17px;
    display: flex;
    flex-direction: column;
    align-items: center;
    padding-top: 5px;
    background: #dde1e9;
}

.splitter {
    width: 10px;
    height: 2px;
    background: #666b74;
}

.ruler {
    height: 19px;
}

.scroll-btn {
    width: 16px;
    height: 17px;
    border: 1px solid #8a909a;
    border-radius: 2px;
    background: linear-gradient(to right, #fff, #dfe3ea);
}

.track {
    flex: 1;
    width: 16px;
    padding: 39px 0 150px;
    display: flex;
}

.thumb {
    flex: 1;
    display: flex;
    align-items: center;
    justify-content: center;
    border: 1px solid #979da7;
    border-radius: 2px;
    background: linear-gradient(to right, #fbfcfd, #dadfe7);
}

.browse {
    height: 17px;
}

/* status bar */
.status {
    display: flex;
    align-items: center;
    height: 22px;
    flex-shrink: 0;
    border-top: 1px solid #8d9197;
    border-bottom: 1px solid #2a2b2f;
    background: linear-gradient(#e3e6ea, #c1c5ca);
}

.status-item {
    padding: 0 9px;
    border-right: 1px solid #9da1a7;
}

.status-right {
    margin-left: auto;
    display: flex;
    align-items: center;
    padding: 0 4px 0 5px;
    border-left: 1px solid #9da1a7;
}

.view {
    width: 18px;
    height: 19px;
}

.zoom-level {
    width: 46px;
}

.zoom-btn {
    width: 16px;
}

.zoom-slider {
    appearance: none;
    width: 100px;
    height: 16px;
    margin: 0;
    background: linear-gradient(#8d9197, #8d9197) center / 100% 1px no-repeat;
}

.zoom-slider::-webkit-slider-thumb {
    appearance: none;
    width: 9px;
    height: 13px;
    border: 1px solid #6b6f76;
    border-radius: 1px 1px 5px 5px;
    background: #f7f8f9;
}

/* taskbar */
.taskbar {
    display: flex;
    height: 40px;
    flex-shrink: 0;
    padding-left: 8px;
    border-top: 1px solid #8b878d;
    color: #fff;
    background:
        radial-gradient(ellipse 60px 40px at 24% 80%, #7a605f, transparent),
        radial-gradient(ellipse 30px 50px at 33% 40%, #5b4438, transparent),
        radial-gradient(ellipse 60px 60px at 44% 40%, #4b4240, transparent),
        radial-gradient(ellipse 50px 60px at 54% 70%, #6a5f6b, transparent),
        radial-gradient(ellipse 40px 40px at 66% 60%, #4d3a33, transparent),
        radial-gradient(ellipse 170px 80px at 79% 80%, #7c6b80, transparent),
        linear-gradient(to right, #4c4a5c, #3b3845 10%, #665f70 16%, #504a52 22%, #35303a 30%, #403a3e 45%, #2f2c35 65%, #6d5f70 78%, #332f35 92%, #2b2a2e);
}

.start {
    width: 38px;
}

.pin {
    width: 63px;
}

.start + .pin {
    margin-left: 12px;
}

.task {
    width: 58px;
    height: 38px;
    margin-right: 4px;
    border: 1px solid #b5afba;
    border-radius: 3px;
    background: linear-gradient(135deg, rgba(255, 255, 255, 0.4), rgba(255, 255, 255, 0.15));
}

.task.many {
    border-right: 8px double #8b8592;
}

.task.current {
    background: linear-gradient(135deg, rgba(255, 255, 255, 0.8), rgba(255, 255, 255, 0.4));
}

.tray {
    margin-left: auto;
    display: flex;
    align-items: center;
    gap: 8px;
}

.printer {
    margin: 0 6px;
}

.clock {
    display: flex;
    flex-direction: column;
    align-items: center;
    width: 68px;
    margin-left: 4px;
    line-height: 17px;
}

.show-desktop {
    width: 14px;
    height: 38px;
    border: 1px solid #8d8b90;
    background: linear-gradient(135deg, #7d7b80, #3a383d);
}
```
